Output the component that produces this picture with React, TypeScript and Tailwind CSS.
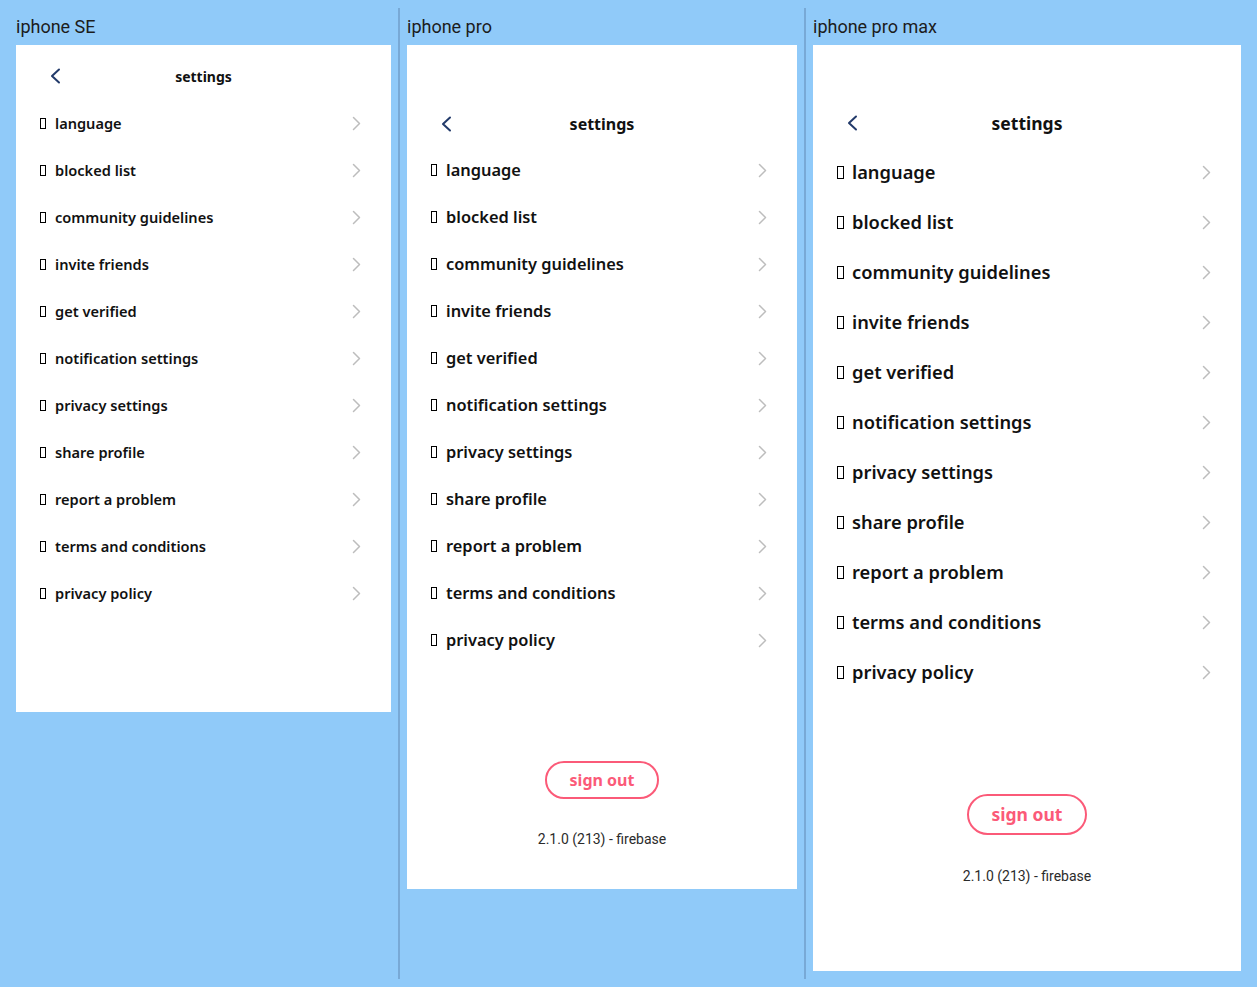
import React from 'react'

const items = [
    'language',
    'blocked list',
    'community guidelines',
    'invite friends',
    'get verified',
    'notification settings',
    'privacy settings',
    'share profile',
    'report a problem',
    'terms and conditions',
    'privacy policy',
]

type Device = {
    label: string
    card: string
    header: string
    title: string
    row: string
    tofu: string
    footer?: {
        wrap: string
        button: string
        version: string
    }
}

const devices: Device[] = [
    {
        label: 'iphone SE',
        card: 'w-[375px] h-[667px]',
        header: 'pt-2 h-[55px]',
        title: 'text-[14px]',
        row: 'h-[47px] text-[14.6px]',
        tofu: 'w-[6px] h-[11px] mr-[9px]',
    },
    {
        label: 'iphone pro',
        card: 'w-[390px] h-[844px]',
        header: 'pt-[56px] h-[102px]',
        title: 'text-[16px]',
        row: 'h-[47px] text-[16.4px]',
        tofu: 'w-[6px] h-[12px] mr-[9px]',
        footer: {
            wrap: 'pb-[39px] gap-[30px]',
            button: 'w-[114px] h-[38px] text-[16px]',
            version: 'text-[14px]',
        },
    },
    {
        label: 'iphone pro max',
        card: 'w-[428px] h-[926px]',
        header: 'pt-[55px] h-[102px]',
        title: 'text-[17.5px]',
        row: 'h-[50px] text-[18.3px]',
        tofu: 'w-[7px] h-[13px] mr-[8px]',
        footer: {
            wrap: 'pb-[84px] gap-[31px]',
            button: 'w-[120px] h-[41px] text-[17.5px]',
            version: 'text-[14px]',
        },
    },
]

function ChevronRight() {
    return (
        <svg width="9" height="15" viewBox="0 0 9 15" fill="none">
            <polyline points="1.5,1.5 7.5,7.5 1.5,13.5" stroke="#bdbdbd" strokeWidth="1.5" strokeLinecap="round" strokeLinejoin="round" />
        </svg>
    )
}

function BackIcon() {
    return (
        <svg width="11" height="16" viewBox="0 0 11 16" fill="none">
            <polyline points="9,1.5 2,8 9,14.5" stroke="#223a6a" strokeWidth="2" strokeLinecap="round" strokeLinejoin="round" />
        </svg>
    )
}

function SettingsScreen({ d }: { d: Device }) {
    return (
        <div className={`${d.card} bg-white flex flex-col font-['Noto_Sans',sans-serif] text-[#111]`}>
            {/* Header */}
            <div className={`${d.header} shrink-0`}>
                <div className="relative h-[46px] flex items-center justify-center">
                    <div className="absolute left-[34px] top-1/2 -translate-y-1/2 flex">
                        <BackIcon />
                    </div>
                    <span className={`${d.title} font-bold`}>settings</span>
                </div>
            </div>

            {/* Rows */}
            <div className="flex flex-col">
                {items.map(item => (
                    <div key={item} className={`${d.row} flex items-center justify-between pl-6 pr-[30px] font-semibold`}>
                        <div className="flex items-center">
                            <span className={`${d.tofu} inline-block border border-black`}></span>
                            <span>{item}</span>
                        </div>
                        <ChevronRight />
                    </div>
                ))}
            </div>

            {/* Footer */}
            {d.footer && (
                <div className={`mt-auto flex flex-col items-center ${d.footer.wrap}`}>
                    <button className={`${d.footer.button} rounded-full border-2 border-[#fb5a78] text-[#fb5a78] font-bold flex items-center justify-center`}>
                        sign out
                    </button>
                    <span className={`${d.footer.version} font-['Roboto',sans-serif] text-[#2b2b2b]`}>2.1.0 (213) - firebase</span>
                </div>
            )}
        </div>
    )
}

export default function App() {
    return (
        <div className="min-h-screen bg-[#90caf9] flex items-stretch px-4 py-2">
            {devices.map((d, i) => (
                <React.Fragment key={d.label}>
                    {i > 0 && <div className="w-[2px] bg-[#78a9d6] mx-[7px] shrink-0"></div>}
                    <div className="flex flex-col pb-2">
                        <div className="h-[37px] flex items-center font-['Roboto',sans-serif] text-[18px] text-[#1c1c1c]">
                            {d.label}
                        </div>
                        <SettingsScreen d={d} />
                    </div>
                </React.Fragment>
            ))}
        </div>
    )
}
